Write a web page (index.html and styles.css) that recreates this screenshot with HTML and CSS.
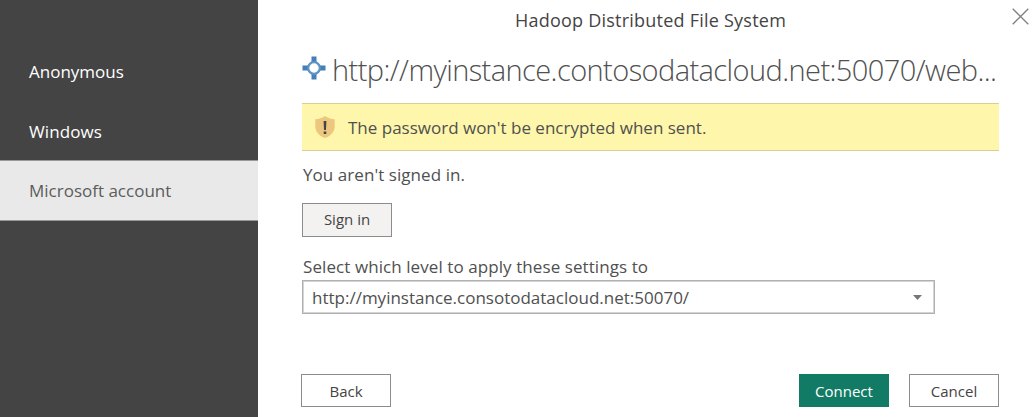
FILE: index.html
```html
<!DOCTYPE html>
<html lang="en">
<head>
<meta charset="utf-8">
<title>Hadoop Distributed File System</title>
<link rel="stylesheet" href="styles.css">
</head>
<body>
<div class="dialog">
  <nav class="sidebar">
    <div class="tab tab-anonymous"><span>Anonymous</span></div>
    <div class="tab tab-windows"><span>Windows</span></div>
    <div class="tab tab-active"><span>Microsoft account</span></div>
  </nav>
  <main class="main">
    <h1 class="title"><span>Hadoop Distributed File System</span></h1>
    <div class="source">
      <svg class="source-icon" width="24" height="24" viewBox="0 0 24 24">
        <path d="M9.5 0.5h5v5h-5zM9.5 18.5h5v5h-5zM0.5 9.5h5v5h-5zM18.5 9.5h5v5h-5z" fill="#437fb8"/>
        <path d="M12 3L21 12L12 21L3 12Z" fill="#437fb8"/>
        <circle cx="12" cy="12" r="5.800" fill="#fff" stroke="#5f94c5" stroke-width="2.200"/>
      </svg>
      <span class="source-url">http://myinstance.contosodatacloud.net:50070/web...</span>
    </div>
    <div class="warning">
      <svg class="shield" width="20" height="22" viewBox="0 0 20 22">
        <path d="M10 0C7.5 2 4 3 0.3 3.2V10C0.3 16 4.500 20 10 22C15.500 20 19.700 16 19.700 10V3.200C16 3 12.500 2 10 0Z" fill="#edc77d"/>
        <path d="M8.600 5h2.800l-.4 9h-2zM8.700 15.500h2.600V18h-2.600z" fill="#454545"/>
      </svg>
      <span class="warning-text">The password won't be encrypted when sent.</span>
    </div>
    <p class="status"><span>You aren't signed in.</span></p>
    <button class="button signin"><span>Sign in</span></button>
    <label class="level-label"><span>Select which level to apply these settings to</span></label>
    <div class="select">
      <span class="select-value">http://myinstance.consotodatacloud.net:50070/</span>
      <svg width="9" height="5" viewBox="0 0 9 5"><path d="M0 0h9L4.500 5z" fill="#777"/></svg>
    </div>
    <footer class="footer">
      <button class="button back"><span>Back</span></button>
      <button class="button connect"><span>Connect</span></button>
      <button class="button cancel"><span>Cancel</span></button>
    </footer>
  </main>
  <svg class="close" width="17" height="17" viewBox="0 0 17 17"><path d="M0.700 0.700l15.600 15.600M16.300 0.700L0.700 16.300" stroke="#808080" stroke-width="1.300"/></svg>
</div>
</body>
</html>
```
FILE: styles.css
```css
* { box-sizing: border-box; }
body {
  margin: 0;
  background: #fff;
  color: #505050;
  font: 17px/24px "Open Sans", "Noto Sans", sans-serif;
}
.dialog {
  position: relative;
  display: flex;
  width: 1036px;
  height: 417px;
  overflow: hidden;
}
.sidebar {
  width: 258px;
  padding-top: 42px;
  background: #444;
}
.tab {
  display: flex;
  align-items: center;
  height: 60px;
  padding-left: 29px;
  color: #fff;
}
.tab-windows {
  height: 58px;
  padding-top: 2px;
  letter-spacing: 0.1px;
}
.tab-active {
  height: 61px;
  background: #e9e9e9;
  border-top: 1px solid #999;
  border-bottom: 1px solid #999;
  color: #5c5c5c;
}
.main {
  display: flex;
  flex-direction: column;
  align-items: flex-start;
  width: 778px;
  padding: 8px 37px 0 44px;
}
.title {
  width: 100%;
  margin: 0;
  font: inherit;
  font-size: 18px;
  letter-spacing: 0.23px;
  color: #444;
  text-align: center;
}
.source {
  display: flex;
  height: 71px;
  padding-top: 16px;
  white-space: nowrap;
}
.source-icon {
  margin-top: 8px;
  margin-right: 6px;
}
.source-url {
  font-size: 29px;
  font-weight: 300;
  line-height: 44px;
  letter-spacing: -0.58px;
}
.warning {
  display: flex;
  align-items: center;
  width: 697px;
  height: 48px;
  padding-left: 13px;
  background: #fef6aa;
  border-top: 1px solid #d6d096;
  border-bottom: 1px solid #d6d096;
}
.warning-text { padding-top: 2px; }
.shield { margin-right: 13px; }
.status {
  margin: 12px 0 16px;
  padding-left: 1px;
  letter-spacing: 0.06px;
}
.button {
  width: 90px;
  height: 33px;
  padding: 0;
  border: 1px solid #8c8c8c;
  background: #fff;
  color: #444;
  font: 15px/20px "Open Sans", "Noto Sans", sans-serif;
}
.signin {
  height: 34px;
  padding-bottom: 2px;
  background: #f3f2f1;
}
.level-label {
  margin-top: 18px;
  padding-left: 1px;
  letter-spacing: 0.08px;
}
.select {
  display: flex;
  align-items: center;
  justify-content: space-between;
  width: 633px;
  height: 34px;
  margin-top: 1px;
  padding: 1px 12px 0 9px;
  border: 1px solid #b0b0b0;
  box-shadow: inset 0 0 0 1px #d4d4d4;
}
.select-value { padding-top: 1px; }
.footer {
  display: flex;
  width: 697px;
  margin-top: 60px;
}
.back { margin-left: -1px; }
.connect {
  margin-left: auto;
  border-color: #127b65;
  background: #127b65;
  color: #fff;
}
.cancel { margin-left: 20px; }
.close { position: absolute; top: 8px; right: 7px; }
```
